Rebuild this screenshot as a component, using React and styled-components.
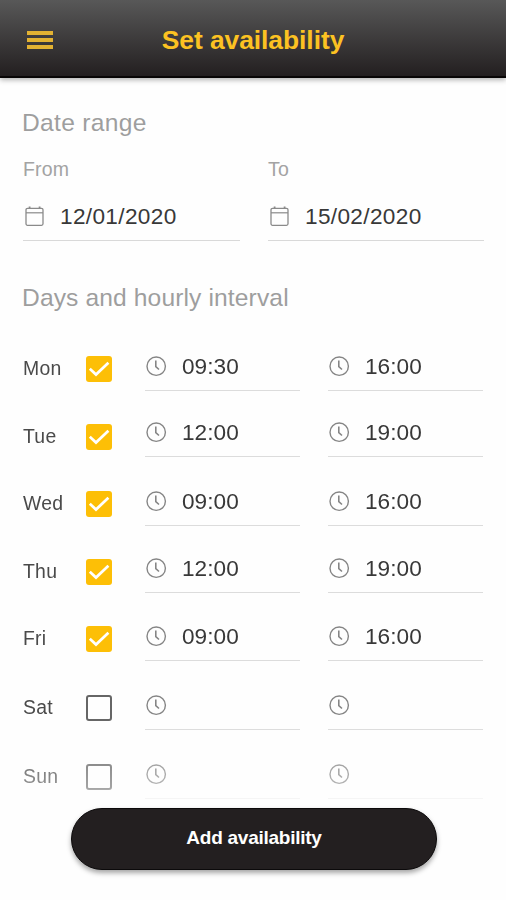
import React from "react";
import styled, { createGlobalStyle } from "styled-components";

const days = [
  { name: "Mon", height: 67, drop: 0, checked: true, from: "09:30", to: "16:00" },
  { name: "Tue", height: 66, drop: 2, checked: true, from: "12:00", to: "19:00" },
  { name: "Wed", height: 69, drop: 0, checked: true, from: "09:00", to: "16:00" },
  { name: "Thu", height: 67, drop: 1, checked: true, from: "12:00", to: "19:00" },
  { name: "Fri", height: 68, drop: 0, checked: true, from: "09:00", to: "16:00" },
  { name: "Sat", height: 69, drop: 0, checked: false, from: "", to: "" },
  { name: "Sun", height: 69, drop: 0, checked: false, from: "", to: "" },
];

const CalendarIcon = () => (
  <svg width="20" height="21" viewBox="0 0 20 21" fill="none" stroke="#8a8a8a">
    <rect x="1" y="2.3" width="17" height="17" rx="1.5" strokeWidth="1.3" />
    <path d="M1 6.8h17" strokeWidth="1.2" />
    <path d="M4.6 .5v2.5M14.6 .5v2.5" strokeWidth="1.8" />
  </svg>
);

const ClockIcon = () => (
  <svg width="22" height="22" viewBox="0 0 22 22" fill="none" stroke="#858585">
    <circle cx="11.2" cy="10.2" r="9.2" strokeWidth="1.4" />
    <path d="M10.8 4.6v6.1l3.2 2.8" strokeWidth="1.6" />
  </svg>
);

const Time = ({ value }) => (
  <TimeField>
    <ClockIcon />
    <Value $spacing="0.05px">{value}</Value>
  </TimeField>
);

const App = () => {
  return (
    <Screen>
      <GlobalStyle />
      <Header>
        <MenuBtn aria-label="Menu">
          <MenuLine />
          <MenuLine />
          <MenuLine />
        </MenuBtn>
        <Title>Set availability</Title>
      </Header>

      <Content>
        {/* Date range */}
        <SectionTitle $spacing="0.3px">Date range</SectionTitle>
        <DateRange>
          <DateColumn>
            <DateLabel>From</DateLabel>
            <DateField>
              <CalendarIcon />
              <Value $spacing="0.35px">12/01/2020</Value>
            </DateField>
          </DateColumn>
          <DateColumn>
            <DateLabel>To</DateLabel>
            <DateField>
              <CalendarIcon />
              <Value $spacing="0.35px">15/02/2020</Value>
            </DateField>
          </DateColumn>
        </DateRange>

        {/* Days */}
        <SectionTitle $spacing="0.12px">Days and hourly interval</SectionTitle>
        <DayList>
          {days.map((day) => (
            <DayRow key={day.name} $height={day.height}>
              <DayName $drop={day.drop}>{day.name}</DayName>
              <Checkbox $checked={day.checked} $drop={day.drop}>
                {day.checked && (
                  <svg width="26" height="26" viewBox="0 0 26 26" fill="none">
                    <path d="M3.8 12.8l6.2 5.8L22.4 6.8" stroke="#fff" strokeWidth="2.7" />
                  </svg>
                )}
              </Checkbox>
              <Time value={day.from} />
              <Time value={day.to} />
            </DayRow>
          ))}
        </DayList>
      </Content>

      <AddBtn>Add availability</AddBtn>
    </Screen>
  );
};

const GlobalStyle = createGlobalStyle`
  body {
    margin: 0;
    background: #fefefe;
    font-family: "Liberation Sans", Arial, sans-serif;
  }
`;
const Screen = styled.div`
  display: flex;
  flex-direction: column;
  width: 506px;
  height: 900px;
  overflow: hidden;
`;
const Header = styled.header`
  display: grid;
  grid-template-columns: 80px 1fr 80px;
  align-items: center;
  box-sizing: border-box;
  flex: none;
  height: 78px;
  padding-top: 2px;
  background: linear-gradient(#585858, #231f20);
  border-bottom: 2px solid #080606;
  box-shadow: 0 2px 5px rgba(0, 0, 0, 0.3);
`;
const MenuBtn = styled.button`
  display: flex;
  flex-direction: column;
  gap: 3px;
  width: 26px;
  margin-left: 27px;
  padding: 1px 0 0;
  border: none;
  background: none;
`;
const MenuLine = styled.span`
  height: 4px;
  background: #e3b232;
`;
const Title = styled.h1`
  margin: 0;
  padding-top: 2px;
  font-size: 26.4px;
  line-height: 30px;
  font-weight: 700;
  letter-spacing: -0.05px;
  text-align: center;
  white-space: nowrap;
  color: #fcc222;
`;
const Content = styled.main`
  display: flex;
  flex-direction: column;
  flex: none;
  padding: 30px 22px 0;
`;
const SectionTitle = styled.h2`
  margin: 0;
  font-size: 24.6px;
  line-height: 30px;
  font-weight: 400;
  letter-spacing: ${(props) => props.$spacing};
  color: #9e9e9e;
`;
const DateRange = styled.div`
  display: grid;
  grid-template-columns: 217px 216px;
  gap: 28px;
  margin: 19px 0 42px 1px;
`;
const DateColumn = styled.div`
  display: flex;
  flex-direction: column;
  gap: 13px;
`;
const DateLabel = styled.span`
  font-size: 19.5px;
  line-height: 24px;
  letter-spacing: 0.2px;
  color: #a3a3a3;
`;
const DateField = styled.div`
  display: flex;
  align-items: center;
  box-sizing: border-box;
  height: 47px;
  padding: 0 0 1px 2px;
  gap: 15px;
  border-bottom: 1px solid #d9d9d9;
`;
const Value = styled.span`
  font-size: 22.6px;
  line-height: 26px;
  letter-spacing: ${(props) => props.$spacing};
  color: #383838;
`;
const DayList = styled.div`
  display: flex;
  flex-direction: column;
  margin-top: 11px;
  /* last row fades out above the button */
  mask-image: linear-gradient(#000 400px, rgba(0, 0, 0, 0.6) 464px, rgba(0, 0, 0, 0.25) 474px);
`;
const DayRow = styled.div`
  display: grid;
  grid-template-columns: 63px 26px 155px 155px;
  align-items: end;
  height: ${(props) => props.$height}px;
  padding-left: 1px;
`;
const DayName = styled.span`
  padding-bottom: ${(props) => 11 - props.$drop}px;
  font-size: 19.4px;
  line-height: 24px;
  letter-spacing: 0.25px;
  color: #4a4a4a;
`;
const Checkbox = styled.span`
  display: flex;
  box-sizing: border-box;
  width: 26px;
  height: 26px;
  margin-bottom: ${(props) => 9 - props.$drop}px;
  border: ${(props) => (props.$checked ? "none" : "2px solid #666")};
  border-radius: 3px;
  background: ${(props) => (props.$checked ? "#fdbf06" : "transparent")};
`;
const TimeField = styled.div`
  display: flex;
  align-items: center;
  box-sizing: border-box;
  width: 155px;
  height: 47px;
  margin-left: 33px;
  padding-bottom: 1px;
  gap: 15px;
  border-bottom: 1px solid #dcdcdc;

  & + & {
    margin-left: 61px;
  }
`;
const AddBtn = styled.button`
  flex: none;
  width: 366px;
  height: 62px;
  margin: 9px 0 0 71px;
  padding: 0 0 3px;
  border: 1px solid #0c0a0b;
  border-radius: 31px;
  background: #231f20;
  box-shadow: 0 3px 5px rgba(0, 0, 0, 0.35);
  font-family: inherit;
  font-size: 19px;
  font-weight: 700;
  letter-spacing: -0.25px;
  color: #fff;
`;

export default App;
